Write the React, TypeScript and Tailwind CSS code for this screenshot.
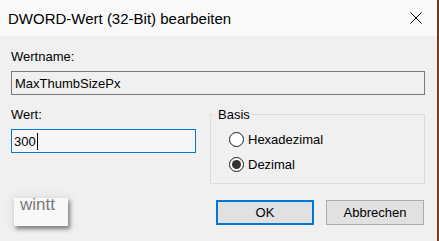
export default function App() {
  return (
    <div className="w-[439px] h-[241px] overflow-hidden bg-[#f0f0f0] border-r-2 border-[#6e3b1f] font-['Liberation_Sans',Arial,sans-serif] text-black">
      {/* title bar */}
      <div className="h-[36px] bg-[#f9f9f9] flex items-center justify-between pl-[8px] pr-[15px] pt-[1px]">
        <span className="text-[15px] leading-[17px]">DWORD-Wert (32-Bit) bearbeiten</span>
        <svg width="12" height="12" viewBox="0 0 12 12" className="mt-[-1px]">
          <path d="M0.5 0.5 L11.5 11.5 M11.5 0.5 L0.5 11.5" stroke="#000" strokeWidth="1" fill="none" />
        </svg>
      </div>

      {/* body */}
      <div className="pl-[11px] pr-[12px] text-[13px] leading-[15px]">
        <div className="mt-[13px]">Wertname:</div>
        <div className="mt-[7px] h-[24px] border border-[#7a7a7a] bg-[#f0f0f0] flex items-center pl-[3px]">
          MaxThumbSizePx
        </div>

        <div className="mt-[12px] flex justify-between">
          <div className="w-[185px]">
            <div>Wert:</div>
            <div className="mt-[7px] h-[24px] border border-[#0078d7] bg-[#f7f7f7] flex items-center pl-[2px]">
              <span>300</span>
              <span className="w-px h-[17px] bg-black ml-[1px]" />
            </div>
          </div>

          <fieldset className="w-[215px] h-[77px] border border-[#dcdcdc] pl-[2px]">
            <legend className="pl-[5px] pr-[2px] leading-[15px]">Basis</legend>
            <div className="pl-[16px] pt-[10px] flex flex-col gap-[10px]">
              <div className="flex items-center gap-[4px]">
                <span className="w-[15px] h-[15px] rounded-full border border-[#1a1a1a] bg-white" />
                <span>Hexadezimal</span>
              </div>
              <div className="flex items-center gap-[4px]">
                <span className="w-[15px] h-[15px] rounded-full border border-[#1a1a1a] bg-white flex items-center justify-center">
                  <span className="w-[9px] h-[9px] rounded-full bg-[#333]" />
                </span>
                <span>Dezimal</span>
              </div>
            </div>
          </fieldset>
        </div>

        <div className="mt-[14px] flex items-start">
          <div className="ml-[3px] w-[54px] h-[28px] bg-[#f8f8f8] pl-[6px] shadow-[2px_3px_4px_rgba(0,0,0,0.45),0_0_8px_3px_rgba(0,0,0,0.06)]">
            <span className="block text-[17px] leading-[14px] text-[#7a7a7a]">wintt</span>
          </div>
          <div className="ml-auto mt-[2px] mr-[1px] flex gap-[12px]">
            <button className="w-[98px] h-[25px] bg-[#e1e1e1] border-2 border-[#0078d7] text-[13px]">OK</button>
            <button className="w-[98px] h-[25px] bg-[#e1e1e1] border border-[#adadad] text-[13px]">Abbrechen</button>
          </div>
        </div>
      </div>
    </div>
  );
}
